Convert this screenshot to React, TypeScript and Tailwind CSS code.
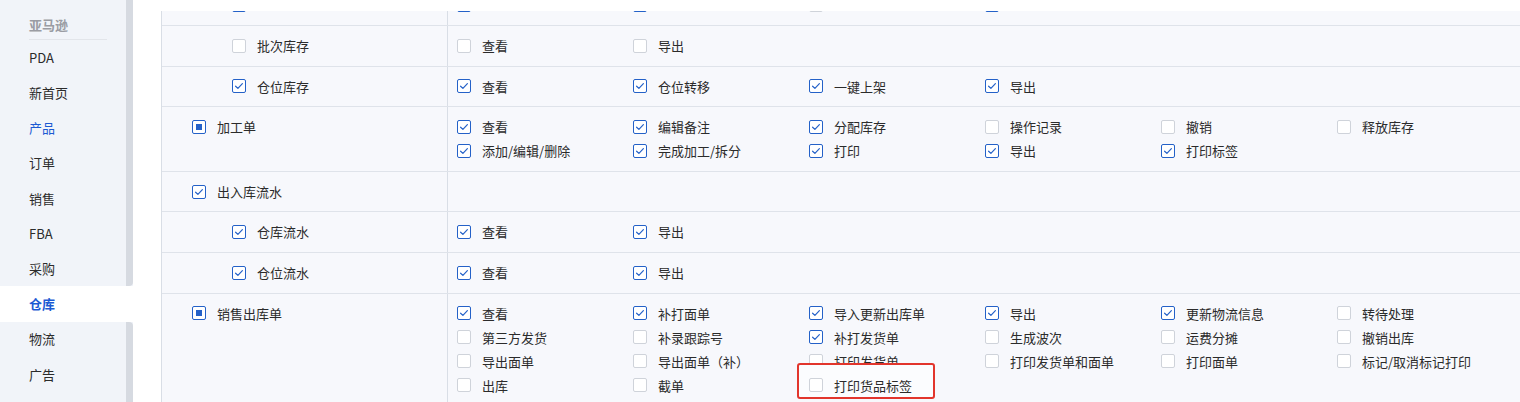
import React from 'react';

type Perm = { label: string; on: boolean; mark?: boolean };
type Row = {
  name: string;
  level: 1 | 2;
  state: 'on' | 'off' | 'half';
  perms: Perm[];
};

const p = (label: string, on = true, mark = false): Perm => ({ label, on, mark });

const navItems = ['PDA', '新首页', '产品', '订单', '销售', 'FBA', '采购', '仓库', '物流', '广告'];

// first row is scrolled away under the top edge; only its checkboxes peek out
const rows: Row[] = [
  { name: '', level: 2, state: 'on', perms: [p(''), p(''), p('', false), p('')] },
  { name: '批次库存', level: 2, state: 'off', perms: [p('查看', false), p('导出', false)] },
  { name: '仓位库存', level: 2, state: 'on', perms: [p('查看'), p('仓位转移'), p('一键上架'), p('导出')] },
  {
    name: '加工单',
    level: 1,
    state: 'half',
    perms: [
      p('查看'), p('编辑备注'), p('分配库存'), p('操作记录', false), p('撤销', false), p('释放库存', false),
      p('添加/编辑/删除'), p('完成加工/拆分'), p('打印'), p('导出'), p('打印标签'),
    ],
  },
  { name: '出入库流水', level: 1, state: 'on', perms: [] },
  { name: '仓库流水', level: 2, state: 'on', perms: [p('查看'), p('导出')] },
  { name: '仓位流水', level: 2, state: 'on', perms: [p('查看'), p('导出')] },
  {
    name: '销售出库单',
    level: 1,
    state: 'half',
    perms: [
      p('查看'), p('补打面单'), p('导入更新出库单'), p('导出'), p('更新物流信息'), p('转待处理', false),
      p('第三方发货', false), p('补录跟踪号', false), p('补打发货单'), p('生成波次', false), p('运费分摊', false), p('撤销出库', false),
      p('导出面单', false), p('导出面单（补）', false), p('打印发货单', false), p('打印发货单和面单', false), p('打印面单', false), p('标记/取消标记打印', false),
      p('出库', false), p('截单', false), p('打印货品标签', false, true),
    ],
  },
];

function Checkbox({ state }: { state: 'on' | 'off' | 'half' }) {
  if (state === 'off') {
    return <span className="block w-[14px] h-[14px] shrink-0 rounded-[2px] border border-[#cfd3da] bg-white" />;
  }
  return (
    <span className="flex items-center justify-center w-[14px] h-[14px] shrink-0 rounded-[2px] border border-[#2461c8] bg-white">
      {state === 'on' ? (
        <svg width="12" height="12" viewBox="0 0 12 12" fill="none">
          <path d="M2.6 6.2 L4.9 8.4 L9.4 3.6" stroke="#2461c8" strokeWidth="1.2" strokeLinecap="round" strokeLinejoin="round" />
        </svg>
      ) : (
        <span className="block w-[6px] h-[6px] bg-[#2461c8]" />
      )}
    </span>
  );
}

function Sidebar() {
  return (
    <aside className="w-[133px] shrink-0 h-full flex flex-col bg-[#f1f4f9]">
      <div className="h-[40px] flex flex-col">
        <div className="flex-1 flex">
          <div className="flex-1 pl-[29px] pt-[15px] text-[13px] leading-[20px] font-bold text-[#9a9ca3]">亚马逊</div>
          <div className="w-[7px] bg-[#d6dae1]" />
        </div>
        <div className="flex">
          <div className="flex-1 pl-[29px] pr-[19px]">
            <div className="border-b border-[#e2e5ea]" />
          </div>
          <div className="w-[7px] bg-[#d6dae1]" />
        </div>
      </div>
      {navItems.map((item, i) => {
        const active = item === '仓库';
        const blue = item === '产品';
        const beforeActive = navItems[i + 1] === '仓库';
        const afterActive = navItems[i - 1] === '仓库';
        return (
          <div key={item} className={`h-[35.2px] flex ${active ? 'bg-white' : ''}`}>
            <div
              className={`flex-1 flex items-center pl-[29px] text-[13px] ${
                active ? 'text-[#1c5ad3] font-bold' : blue ? 'text-[#1c5ad3]' : 'text-[#2b2b2b]'
              }`}
            >
              {item}
            </div>
            {!active && (
              <div
                className={`w-[7px] bg-[#d6dae1] ${beforeActive ? 'rounded-br-[4px]' : ''} ${
                  afterActive ? 'rounded-tr-[4px]' : ''
                }`}
              />
            )}
          </div>
        );
      })}
      <div className="flex-1 flex">
        <div className="flex-1" />
        <div className="w-[7px] bg-[#d6dae1]" />
      </div>
    </aside>
  );
}

function PermItem({ perm }: { perm: Perm }) {
  return (
    <div className={`h-[24px] flex items-center ${perm.mark ? 'relative' : ''}`}>
      {/* red annotation frame drawn over the screenshot */}
      {perm.mark && (
        <div className="absolute -left-[12px] -top-[10.4px] w-[138px] h-[36px] border-2 border-[#e2352c] rounded-[3px] bg-[#fbfcfe]" />
      )}
      <div className={`flex items-center gap-[11px] ${perm.mark ? 'relative z-10' : ''}`}>
        <Checkbox state={perm.on ? 'on' : 'off'} />
        {perm.label && <span className="text-[13px] text-[#2b2b2b] whitespace-nowrap">{perm.label}</span>}
      </div>
    </div>
  );
}

function PermRow({ row }: { row: Row }) {
  return (
    <div className="flex border-b border-[#dfe3ea]">
      <div className={`w-[286px] shrink-0 border-r border-[#d9dee6] py-[7.8px] ${row.level === 1 ? 'pl-[30px]' : 'pl-[70px]'}`}>
        <div className="h-[24px] flex items-center gap-[11px]">
          <Checkbox state={row.state} />
          {row.name && <span className="text-[13px] text-[#2b2b2b]">{row.name}</span>}
        </div>
      </div>
      <div className="flex-1 py-[7.8px] pl-[9px]">
        <div className="grid grid-cols-[repeat(6,176px)]">
          {row.perms.map((perm, i) => (
            <PermItem key={i} perm={perm} />
          ))}
        </div>
      </div>
    </div>
  );
}

export default function App() {
  return (
    <div
      className="relative w-[1520px] h-[402px] overflow-hidden flex bg-white"
      style={{ fontFamily: '"Noto Sans CJK SC", "Noto Sans", sans-serif' }}
    >
      <Sidebar />
      <main className="flex-1 h-full pl-[28px] pt-[11px] overflow-hidden">
        <div className="h-full overflow-hidden">
          <div className="-mt-[25.6px] border-l border-[#d9dee6] bg-[#f7f8fc]">
            {rows.map((row, i) => (
              <PermRow key={i} row={row} />
            ))}
          </div>
        </div>
      </main>
    </div>
  );
}
